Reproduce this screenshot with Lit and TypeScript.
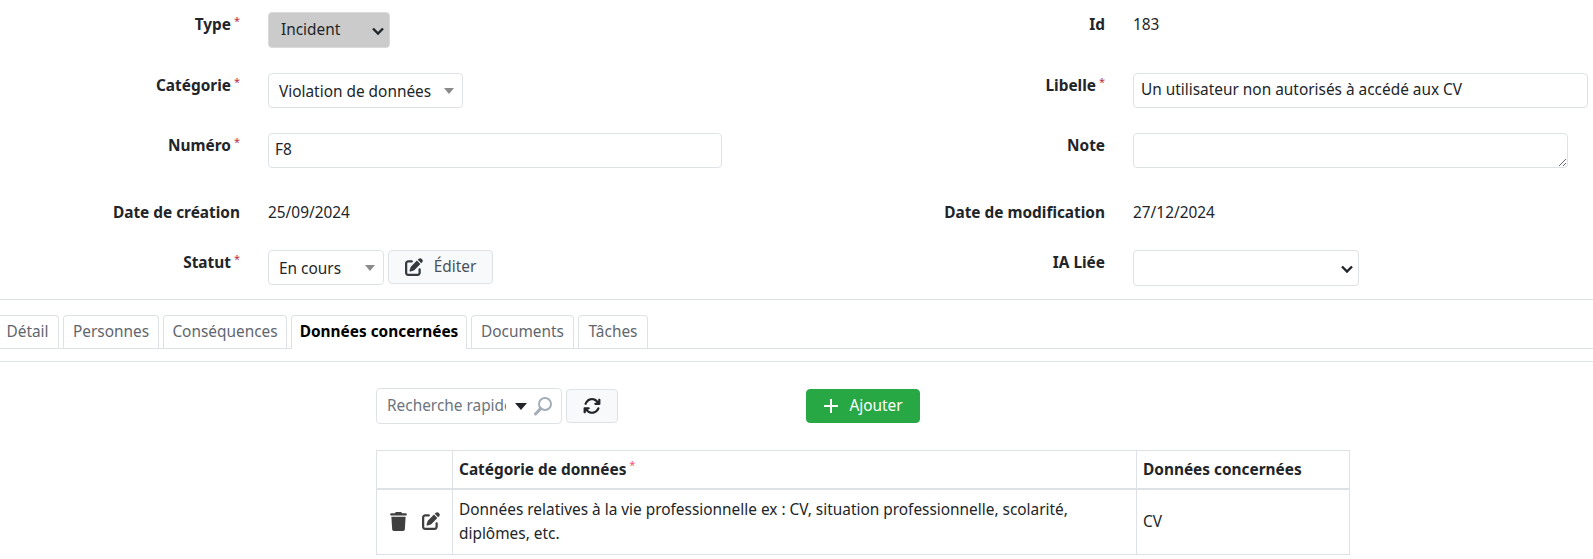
import { LitElement, html, css } from "lit";
import { customElement } from "lit/decorators.js";

const editPath = "M471.6 21.7c-21.9-21.9-57.3-21.9-79.2 0L362.3 51.7l97.9 97.9 30.1-30.1c21.9-21.9 21.9-57.3 0-79.2L471.6 21.7zm-299.2 220c-6.1 6.1-10.8 13.6-13.5 21.9l-29.6 88.8c-2.9 8.6-.6 18.1 5.8 24.6s15.9 8.7 24.6 5.8l88.8-29.6c8.2-2.7 15.7-7.4 21.9-13.5L437.7 172.3 339.7 74.3 172.4 241.7zM96 64C43 64 0 107 0 160V416c0 53 43 96 96 96H352c53 0 96-43 96-96V320c0-17.7-14.3-32-32-32s-32 14.3-32 32v96c0 17.7-14.3 32-32 32H96c-17.7 0-32-14.3-32-32V160c0-17.7 14.3-32 32-32h96c17.7 0 32-14.3 32-32s-14.3-32-32-32H96z";
const trashPath = "M135.2 17.7L128 32H32C14.3 32 0 46.3 0 64S14.3 96 32 96H416c17.7 0 32-14.3 32-32s-14.3-32-32-32H320l-7.2-14.3C307.4 6.8 296.3 0 284.2 0H163.8c-12.1 0-23.2 6.8-28.6 17.7zM416 128H32L53.2 467c1.6 25.3 22.6 45 47.9 45H346.9c25.3 0 46.3-19.7 47.9-45L416 128z";
const syncPath = "M105.1 202.6c7.7-21.8 20.2-42.3 37.8-59.8c62.5-62.5 163.8-62.5 226.3 0L386.3 160H352c-17.7 0-32 14.3-32 32s14.3 32 32 32H463.5c0 0 0 0 0 0h.4c17.7 0 32-14.3 32-32V80c0-17.7-14.3-32-32-32s-32 14.3-32 32v35.2L414.4 97.6c-87.5-87.5-229.3-87.5-316.8 0C73.2 122 55.6 150.7 44.8 181.4c-5.9 16.7 2.9 34.9 19.5 40.8s34.9-2.9 40.8-19.5zM39 289.3c-5 1.5-9.8 4.2-13.7 8.2c-4 4-6.7 8.8-8.1 14c-.3 1.2-.6 2.5-.8 3.8c-.3 1.7-.4 3.4-.4 5.1V432c0 17.7 14.3 32 32 32s32-14.3 32-32V396.9l17.6 17.5 0 0c87.5 87.4 229.3 87.4 316.7 0c24.4-24.4 42.1-53.1 52.9-83.7c5.9-16.7-2.9-34.9-19.5-40.8s-34.9 2.9-40.8 19.5c-7.7 21.8-20.2 42.3-37.8 59.8c-62.5 62.5-163.8 62.5-226.3 0l-.1-.1L125.6 352H160c17.7 0 32-14.3 32-32s-14.3-32-32-32H48.4c-1.6 0-3.2 .1-4.8 .3s-3.1 .5-4.6 1z";

@customElement("app-root")
export class AppRoot extends LitElement {
  static styles = css`
    :host {
      display: block;
      width: 1593px;
      height: 559px;
      overflow: hidden;
      background: #fff;
      color: #212529;
      font-family: "Noto Sans", "Open Sans", sans-serif;
      font-size: 15.4px;
      line-height: 24px;
    }
    .form {
      display: grid;
      grid-template-columns: 240px 593px 272px 1fr;
      grid-template-rows: 61px 60px 65px 52px 50px;
      padding-top: 12px;
      box-sizing: border-box;
      height: 300px;
      border-bottom: 1px solid #dee2e6;
    }
    .label {
      text-align: right;
      font-weight: 700;
      margin-top: 1px;
      white-space: nowrap;
    }
    .label.date-label {
      margin-top: 3px;
    }
    .req {
      color: #b8303f;
      font-weight: 400;
      font-size: 11px;
      line-height: 0;
      position: relative;
      top: -5px;
      margin-left: 3px;
    }
    .value {
      padding-left: 28px;
      display: flex;
      align-items: flex-start;
      gap: 4px;
    }
    .plain {
      margin-top: 1px;
    }
    .date {
      padding-top: 3px;
    }
    .selwrap {
      position: relative;
      height: 36px;
    }
    .selwrap svg {
      position: absolute;
      top: 15px;
      right: 5px;
      stroke: #212529;
      fill: none;
      pointer-events: none;
    }
    select,
    input,
    textarea,
    .s2 {
      box-sizing: border-box;
      font: inherit;
      color: #212529;
      border: 1px solid #dee2e6;
      border-radius: 4px;
      background-color: #fff;
      margin: 0;
      outline: none;
    }
    select {
      appearance: none;
      -webkit-appearance: none;
      display: block;
      height: 36px;
      padding: 0 0 1px 12px;
    }
    select.type {
      width: 122px;
      background-color: #cbcbcb;
      border-color: #d9d9d9;
    }
    select.ia {
      width: 226px;
    }
    .s2 {
      height: 35px;
      display: flex;
      align-items: center;
      justify-content: space-between;
      padding: 2px 8px 0 10px;
      white-space: nowrap;
    }
    .s2-cat {
      width: 195px;
    }
    .s2-stat {
      width: 116px;
    }
    .caret {
      width: 0;
      height: 0;
      margin-top: -2px;
      border-left: 5px solid transparent;
      border-right: 5px solid transparent;
      border-top: 6px solid #8a8a8a;
    }
    input {
      height: 35px;
      padding: 0 7px 2px;
      display: block;
    }
    input.numero {
      width: 454px;
      padding-left: 6px;
    }
    input.libelle {
      width: 455px;
    }
    textarea {
      display: block;
      width: 435px;
      height: 35px;
      padding: 0 7px;
      resize: both;
    }
    .btn {
      box-sizing: border-box;
      display: inline-flex;
      align-items: center;
      justify-content: center;
      border: 1px solid #dee2e6;
      border-radius: 4px;
      background: #f8f9fa;
      color: #212529;
      height: 34px;
      font: inherit;
      padding: 0;
    }
    .btn svg {
      fill: currentColor;
      display: block;
    }
    .edit-btn {
      width: 105px;
      gap: 11px;
      color: #495057;
    }
    .edit-btn svg {
      fill: #343a40;
    }
    .tabs-wrap {
      padding-top: 15px;
    }
    .tabs-inner {
      border-bottom: 1px solid #dee2e6;
      height: 33px;
    }
    .tabs {
      display: grid;
      grid-template-columns: 63px 96px 124px 176px 103px 70px;
      column-gap: 4px;
      margin-left: -4px;
      height: 33px;
    }
    .tab {
      box-sizing: border-box;
      height: 33px;
      border: 1px solid #dee2e6;
      border-bottom: 0;
      border-radius: 4px 4px 0 0;
      text-align: center;
      line-height: 31px;
      color: #5f666d;
      white-space: nowrap;
      background: #fff;
    }
    .tab.active {
      color: #000;
      font-weight: 700;
      height: 34px;
      position: relative;
    }
    .sep {
      border-top: 1px solid #dee2e6;
      margin-top: 12px;
    }
    .toolbar {
      display: flex;
      margin: 26px 0 0 376px;
      align-items: flex-start;
    }
    .search {
      box-sizing: border-box;
      width: 186px;
      height: 36px;
      border: 1px solid #dee2e6;
      border-radius: 4px;
      display: flex;
      align-items: center;
      padding: 0 6px 0 10px;
      color: #6c757d;
      overflow: hidden;
      flex: none;
    }
    .search span {
      width: 119px;
      overflow: hidden;
      white-space: nowrap;
      flex: none;
    }
    .search .tri {
      flex: none;
      width: 0;
      height: 0;
      border-left: 6.5px solid transparent;
      border-right: 6.5px solid transparent;
      border-top: 7px solid #212529;
      margin: 0 6px 0 9px;
    }
    .search svg {
      flex: none;
    }
    .refresh {
      width: 52px;
      margin: 1px 0 0 4px;
      flex: none;
    }
    .add {
      width: 114px;
      flex: none;
      margin: 1px 0 0 188px;
      background: #28a745;
      border-color: #28a745;
      color: #fff;
      gap: 10px;
    }
    .add svg {
      stroke: #fff;
      fill: none;
    }
    table {
      border-collapse: collapse;
      margin: 26px 0 0 376px;
      width: 974px;
      table-layout: fixed;
    }
    th,
    td {
      border: 1px solid #dee2e6;
      padding: 8px 6px;
      text-align: left;
      vertical-align: middle;
    }
    th {
      border-bottom-width: 2px;
      height: 38px;
      box-sizing: border-box;
      padding: 1px 6px 0;
    }
    .actions {
      display: flex;
      justify-content: center;
      gap: 15px;
    }
    .actions svg {
      fill: #3f3f3f;
      display: block;
    }
    .treq {
      color: #f0566a;
      font-weight: 400;
      font-size: 11px;
      line-height: 0;
      position: relative;
      top: -6px;
      margin-left: 3px;
    }
  `;

  label(text: string, req = false, cls = "") {
    return html`<div class="label ${cls}">${text}${req ? html`<span class="req">*</span>` : ""}</div>`;
  }

  edit(size: number) {
    return html`<svg width=${size} height=${size} viewBox="0 0 512 512"><path d=${editPath}></path></svg>`;
  }

  chevron() {
    return html`<svg width="14" height="9" viewBox="0 0 14 9"><path d="M2 1.5L7 6.5L12 1.5" stroke-width="2.4"></path></svg>`;
  }

  render() {
    return html`
      <div class="form">
        ${this.label("Type", true)}
        <div class="value">
          <div class="selwrap">
            <select class="type"><option>Incident</option></select>
            ${this.chevron()}
          </div>
        </div>
        ${this.label("Id")}
        <div class="value plain">183</div>

        ${this.label("Catégorie", true)}
        <div class="value">
          <div class="s2 s2-cat">Violation de données<i class="caret"></i></div>
        </div>
        ${this.label("Libelle", true)}
        <div class="value">
          <input class="libelle" .value=${"Un utilisateur non autorisés à accédé aux CV"} />
        </div>

        ${this.label("Numéro", true)}
        <div class="value"><input class="numero" .value=${"F8"} /></div>
        ${this.label("Note")}
        <div class="value"><textarea></textarea></div>

        ${this.label("Date de création", false, "date-label")}
        <div class="value date">25/09/2024</div>
        ${this.label("Date de modification", false, "date-label")}
        <div class="value date">27/12/2024</div>

        ${this.label("Statut", true)}
        <div class="value">
          <div class="s2 s2-stat">En cours<i class="caret"></i></div>
          <button class="btn edit-btn">${this.edit(18)}Éditer</button>
        </div>
        ${this.label("IA Liée")}
        <div class="value">
          <div class="selwrap">
            <select class="ia"><option></option></select>
            ${this.chevron()}
          </div>
        </div>
      </div>

      <div class="tabs-wrap">
        <div class="tabs-inner">
          <div class="tabs">
            <div class="tab">Détail</div>
            <div class="tab">Personnes</div>
            <div class="tab">Conséquences</div>
            <div class="tab active">Données concernées</div>
            <div class="tab">Documents</div>
            <div class="tab">Tâches</div>
          </div>
        </div>
      </div>
      <div class="sep"></div>

      <div class="toolbar">
        <div class="search">
          <span>Recherche rapide</span><i class="tri"></i>
          <svg width="20" height="20" viewBox="0 0 20 20" fill="none" stroke="#a3adb8">
            <circle cx="12" cy="8" r="6" stroke-width="2"></circle>
            <path d="M7.6 12.6L2.5 18" stroke-width="3" stroke-linecap="round"></path>
          </svg>
        </div>
        <div class="btn refresh">
          <svg width="18" height="18" viewBox="0 0 512 512"><path d=${syncPath}></path></svg>
        </div>
        <div class="btn add">
          <svg width="16" height="16" viewBox="0 0 16 16"><path d="M8 1v14M1 8h14" stroke-width="2"></path></svg>
          Ajouter
        </div>
      </div>

      <table>
        <colgroup><col style="width:76px" /><col style="width:684px" /><col /></colgroup>
        <thead>
          <tr>
            <th></th>
            <th>Catégorie de données<span class="treq">*</span></th>
            <th>Données concernées</th>
          </tr>
        </thead>
        <tbody>
          <tr>
            <td>
              <div class="actions">
                <svg width="17" height="19" viewBox="0 0 448 512"><path d=${trashPath}></path></svg>
                ${this.edit(18)}
              </div>
            </td>
            <td>Données relatives à la vie professionnelle ex : CV, situation professionnelle, scolarité,<br />diplômes, etc.</td>
            <td>CV</td>
          </tr>
        </tbody>
      </table>
    `;
  }
}
